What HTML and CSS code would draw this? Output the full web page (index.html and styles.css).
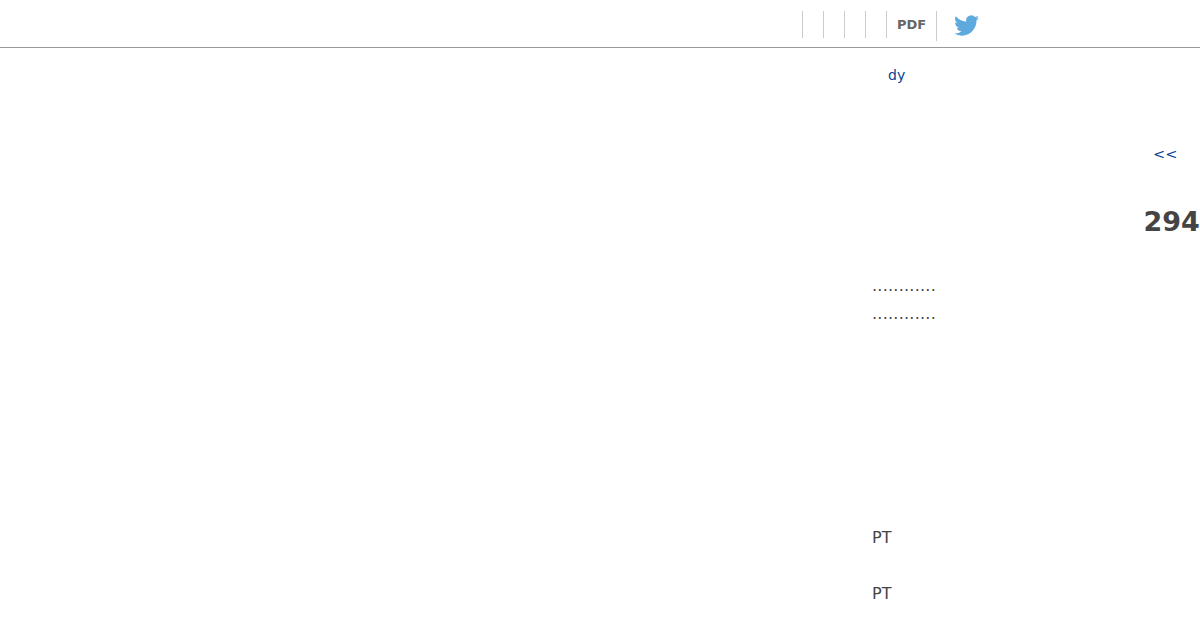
FILE: index.html
```html
<!DOCTYPE html>
<html lang="en">
<head>
<meta charset="utf-8">
<title>294</title>
<link rel="stylesheet" href="styles.css">
</head>
<body>
<header class="topbar">
  <nav class="tools">
    <span class="tool"></span>
    <span class="tool"></span>
    <span class="tool"></span>
    <span class="tool"></span>
    <a class="tool pdf" href="#">PDF</a>
    <a class="share" href="#" aria-label="Twitter">
      <svg class="bird" viewBox="0 0 24 24" width="25" height="25"><path fill="#5ea9dd" d="M23.95 4.57a10 10 0 0 1-2.82.77 4.96 4.96 0 0 0 2.16-2.72c-.95.55-2 .96-3.13 1.18a4.92 4.92 0 0 0-8.38 4.48C7.69 8.1 4.07 6.13 1.64 3.16a4.82 4.82 0 0 0-.66 2.47c0 1.71.87 3.21 2.19 4.1a4.9 4.9 0 0 1-2.23-.61v.06c0 2.38 1.69 4.37 3.95 4.83a5 5 0 0 1-2.22.08 4.94 4.94 0 0 0 4.6 3.42A9.87 9.87 0 0 1 0 19.54a14 14 0 0 0 7.56 2.21c9.05 0 14-7.5 14-13.98 0-.21 0-.42-.02-.63a9.94 9.94 0 0 0 2.41-2.57z"/></svg>
    </a>
  </nav>
</header>
<main class="content">
  <a class="sub-link" href="#">dy</a>
  <a class="back-link" href="#">&lt;&lt;</a>
  <h1 class="number">294</h1>
  <p class="dots first">............</p>
  <p class="dots">............</p>
  <p class="unit first-unit">PT</p>
  <p class="unit">PT</p>
</main>
</body>
</html>
```
FILE: styles.css
```css
html, body {
  margin: 0;
  padding: 0;
  background: #fff;
}
body {
  width: 1200px;
  height: 630px;
  overflow: hidden;
  font-family: "DejaVu Sans", sans-serif;
  color: #444;
}
a {
  text-decoration: none;
}
.topbar {
  box-sizing: border-box;
  height: 48px;
  border-bottom: 1px solid #999;
  padding: 11px 0 0 802px;
}
.tools {
  display: flex;
  align-items: flex-start;
}
.tool {
  box-sizing: border-box;
  width: 21px;
  height: 27px;
  border-left: 1px solid #ccc;
}
.pdf {
  width: 50px;
  padding-left: 10px;
  font-size: 13px;
  font-weight: 700;
  line-height: 27px;
  color: #666;
}
.share {
  box-sizing: border-box;
  height: 30px;
  padding: 2px 0 0 17px;
  border-left: 1px solid #ccc;
}
.bird {
  display: block;
}
.content {
  padding-left: 872px;
}
.sub-link {
  display: block;
  margin: 18px 0 0 16px;
  font-size: 14px;
  line-height: 18px;
  color: #0a3d91;
}
.back-link {
  display: block;
  margin: 61px 0 0 281px;
  font-size: 14.5px;
  line-height: 18px;
  color: #0a3d91;
}
.number {
  margin: 42px 0 0 271.5px;
  width: 56px;
  font-size: 27px;
  font-weight: 700;
  line-height: 34px;
  color: #444;
}
.dots,
.unit {
  margin: 0;
  font-size: 16px;
  line-height: 28px;
  color: #444;
}
.dots {
  letter-spacing: 0.25px;
}
.dots.first {
  margin-top: 33px;
}
.unit {
  margin-top: 28px;
}
.unit.first-unit {
  margin-top: 196px;
}
```
